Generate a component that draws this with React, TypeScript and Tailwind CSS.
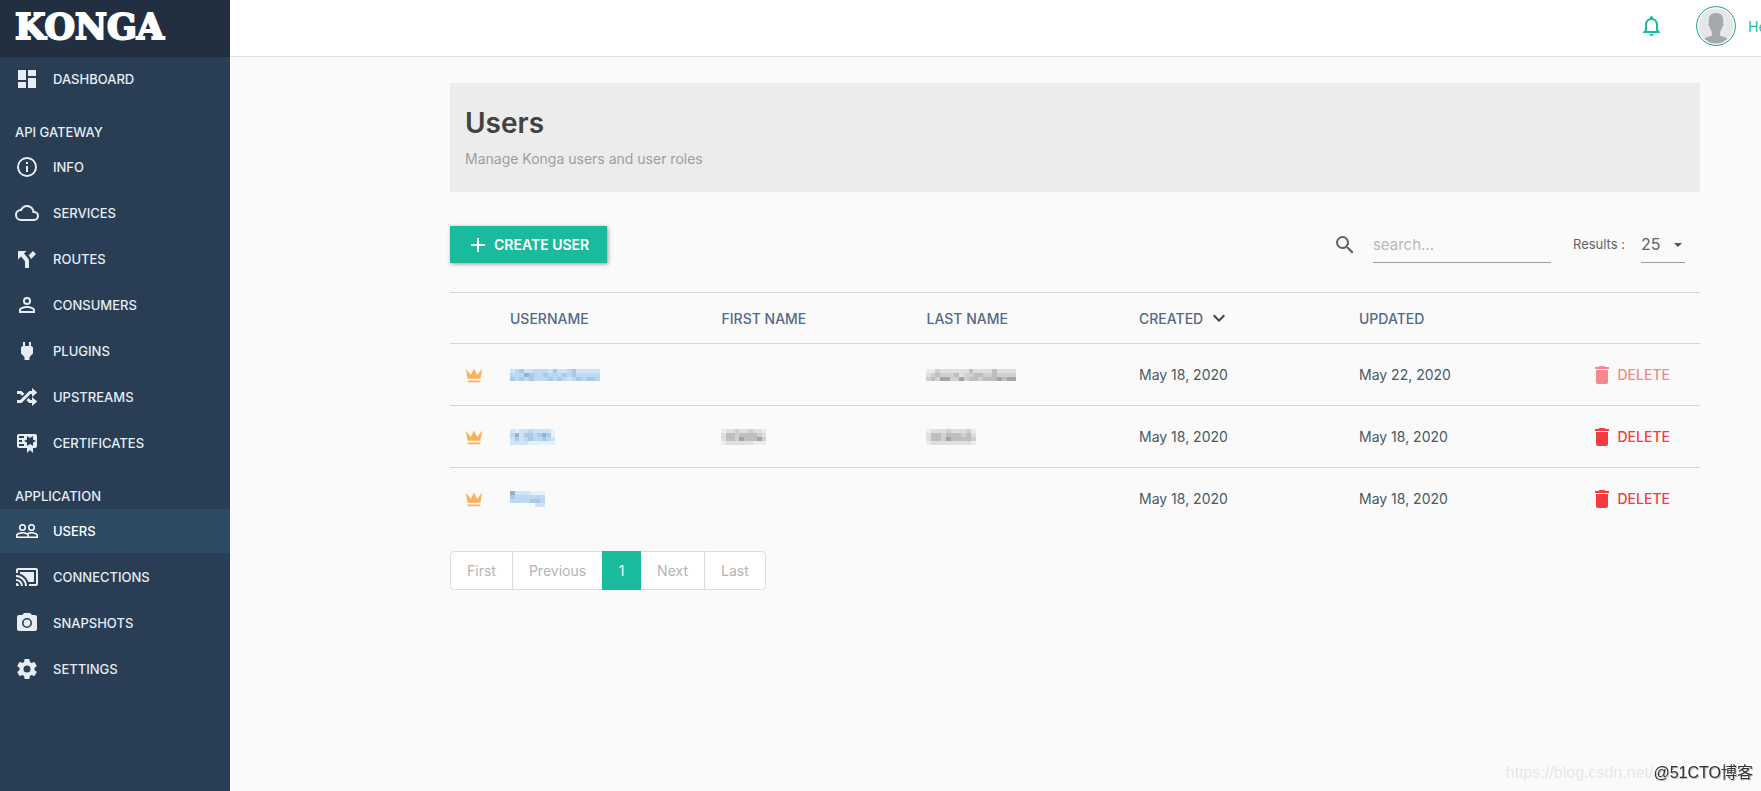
import React from "react";

const ICONS = {
  dashboard: "M13,3V9H21V3M13,21H21V11H13M3,21H11V15H3M3,13H11V3H3V13Z",
  info: "M11,9H13V7H11M12,20C7.59,20 4,16.41 4,12C4,7.59 7.59,4 12,4C16.41,4 20,7.59 20,12C20,16.41 16.41,20 12,20M12,2A10,10 0 0,0 2,12A10,10 0 0,0 12,22A10,10 0 0,0 22,12A10,10 0 0,0 12,2M11,17H13V11H11V17Z",
  cloud: "M19,18H6A4,4 0 0,1 2,14A4,4 0 0,1 6,10H6.71C7.37,7.69 9.5,6 12,6A5.5,5.5 0 0,1 17.5,11.5V12H19A3,3 0 0,1 22,15A3,3 0 0,1 19,18M19.35,10.03C18.67,6.59 15.64,4 12,4C9.11,4 6.6,5.64 5.35,8.03C2.34,8.36 0,10.9 0,14A6,6 0 0,0 6,20H19A5,5 0 0,0 24,15C24,12.36 21.95,10.22 19.35,10.03Z",
  fork: "M3,4V12.5L6,9.5L9,13C10,14 10,15 10,15V21H14V14C14,14 14,13 13.47,12C12.94,11 12,10 12,10L9,6.58L11.5,4M18,4L13.54,8.47L14,9C14,9 14.93,10 15.47,11C15.68,11.4 15.8,11.79 15.87,12.13L21,7",
  account: "M12,13C9.33,13 4,14.33 4,17V20H20V17C20,14.33 14.67,13 12,13M12,4A4,4 0 0,0 8,8A4,4 0 0,0 12,12A4,4 0 0,0 16,8A4,4 0 0,0 12,4M12,14.9C14.97,14.9 18.1,16.36 18.1,17V18.1H5.9V17C5.9,16.36 9,14.9 12,14.9M12,5.9A2.1,2.1 0 0,1 14.1,8A2.1,2.1 0 0,1 12,10.1A2.1,2.1 0 0,1 9.9,8A2.1,2.1 0 0,1 12,5.9Z",
  plug: "M16,7V3H14V7H10V3H8V7H8C7,7 6,8 6,9V14.5L9.5,18V21H14.5V18L18,14.5V9C18,8 17,7 16,7Z",
  shuffle: "M17,3L22.25,7.5L17,12L22.25,16.5L17,21V18H14.26L11.44,15.18L13.56,13.06L15.5,15H17V12L17,9H15.5L6.5,18H2V15H5.26L14.26,6H17V3M2,6H6.5L9.32,8.82L7.2,10.94L5.26,9H2V6Z",
  certificate: "M4,3C2.89,3 2,3.89 2,5V15A2,2 0 0,0 4,17H12V22L15,19L18,22V17H20A2,2 0 0,0 22,15V8L22,6V5A2,2 0 0,0 20,3H16V3H4M12,5L15,7L18,5V8.5L21,10L18,11.5V15L15,13L12,15V11.5L9,10L12,8.5V5M4,5H9V7H4V5M4,9H7V11H4V9M4,13H9V15H4V13Z",
  accounts: "M16.5,6.5A2,2 0 0,1 18.5,8.5A2,2 0 0,1 16.5,10.5A2,2 0 0,1 14.5,8.5A2,2 0 0,1 16.5,6.5M16.5,12A3.5,3.5 0 0,0 20,8.5A3.5,3.5 0 0,0 16.5,5A3.5,3.5 0 0,0 13,8.5A3.5,3.5 0 0,0 16.5,12M7.5,6.5A2,2 0 0,1 9.5,8.5A2,2 0 0,1 7.5,10.5A2,2 0 0,1 5.5,8.5A2,2 0 0,1 7.5,6.5M7.5,12A3.5,3.5 0 0,0 11,8.5A3.5,3.5 0 0,0 7.5,5A3.5,3.5 0 0,0 4,8.5A3.5,3.5 0 0,0 7.5,12M21.5,17.5H14V16.25C14,15.79 13.8,15.39 13.5,15.03C14.36,14.73 15.44,14.5 16.5,14.5C18.94,14.5 21.5,15.71 21.5,16.25M12.5,17.5H2.5V16.25C2.5,15.71 5.06,14.5 7.5,14.5C9.94,14.5 12.5,15.71 12.5,16.25M16.5,13C15.3,13 13.43,13.34 12,14C10.57,13.33 8.7,13 7.5,13C5.33,13 1,14.08 1,16.25V19H23V16.25C23,14.08 18.67,13 16.5,13Z",
  cast: "M21,3H3C1.89,3 1,3.89 1,5V8H3V5H21V19H14V21H21A2,2 0 0,0 23,19V5C23,3.89 22.1,3 21,3M1,10V12A9,9 0 0,1 10,21H12C12,14.92 7.07,10 1,10M19,7H5V8.63C8.96,9.91 12.09,13.04 13.37,17H19M1,14V16A5,5 0 0,1 6,21H8A7,7 0 0,0 1,14M1,18V21H4A3,3 0 0,0 1,18Z",
  camera: "M4,4H7L9,2H15L17,4H20A2,2 0 0,1 22,6V18A2,2 0 0,1 20,20H4A2,2 0 0,1 2,18V6A2,2 0 0,1 4,4M12,7A5,5 0 0,0 7,12A5,5 0 0,0 12,17A5,5 0 0,0 17,12A5,5 0 0,0 12,7M12,8.6A3.4,3.4 0 0,1 15.4,12A3.4,3.4 0 0,1 12,15.4A3.4,3.4 0 0,1 8.6,12A3.4,3.4 0 0,1 12,8.6Z",
  settings: "M12,15.5A3.5,3.5 0 0,1 8.5,12A3.5,3.5 0 0,1 12,8.5A3.5,3.5 0 0,1 15.5,12A3.5,3.5 0 0,1 12,15.5M19.43,12.97C19.47,12.65 19.5,12.33 19.5,12C19.5,11.67 19.47,11.34 19.43,11L21.54,9.37C21.73,9.22 21.78,8.95 21.66,8.73L19.66,5.27C19.54,5.05 19.27,4.96 19.05,5.05L16.56,6.05C16.04,5.66 15.5,5.32 14.87,5.07L14.5,2.42C14.46,2.18 14.25,2 14,2H10C9.75,2 9.54,2.18 9.5,2.42L9.13,5.07C8.5,5.32 7.96,5.66 7.44,6.05L4.95,5.05C4.73,4.96 4.46,5.05 4.34,5.27L2.34,8.73C2.21,8.95 2.27,9.22 2.46,9.37L4.57,11C4.53,11.34 4.5,11.67 4.5,12C4.5,12.33 4.53,12.65 4.57,12.97L2.46,14.63C2.27,14.78 2.21,15.05 2.34,15.27L4.34,18.73C4.46,18.95 4.73,19.03 4.95,18.95L7.44,17.94C7.96,18.34 8.5,18.68 9.13,18.93L9.5,21.58C9.54,21.82 9.75,22 10,22H14C14.25,22 14.46,21.82 14.5,21.58L14.87,18.93C15.5,18.67 16.04,18.34 16.56,17.94L19.05,18.95C19.27,19.03 19.54,18.95 19.66,18.73L21.66,15.27C21.78,15.05 21.73,14.78 21.54,14.63L19.43,12.97Z",
  crown: "M5,16L3,5L8.5,12L12,5L15.5,12L21,5L19,16H5M19,19A1,1 0 0,1 18,20H6A1,1 0 0,1 5,19V18H19V19Z",
  trash: "M19,4H15.5L14.5,3H9.5L8.5,4H5V6H19M6,19A2,2 0 0,0 8,21H16A2,2 0 0,0 18,19V7H6V19Z",
  bell: "M16,17H7V10.5C7,8 9,6 11.5,6C14,6 16,8 16,10.5M18,16V10.5C18,7.43 15.86,4.86 13,4.18V3.5A1.5,1.5 0 0,0 11.5,2A1.5,1.5 0 0,0 10,3.5V4.18C7.13,4.86 5,7.43 5,10.5V16L3,18V19H20V18M11.5,22A2,2 0 0,0 13.5,20H9.5A2,2 0 0,0 11.5,22Z",
  plus: "M19,13H13V19H11V13H5V11H11V5H13V11H19V13Z",
  search: "M9.5,3A6.5,6.5 0 0,1 16,9.5C16,11.11 15.41,12.59 14.44,13.73L14.71,14H15.5L20.5,19L19,20.5L14,15.5V14.71L13.73,14.44C12.59,15.41 11.11,16 9.5,16A6.5,6.5 0 0,1 3,9.5A6.5,6.5 0 0,1 9.5,3M9.5,5C7,5 5,7 5,9.5C5,12 7,14 9.5,14C12,14 14,12 14,9.5C14,7 12,5 9.5,5Z",
  chevron: "M7.41,8.58L12,13.17L16.59,8.58L18,10L12,16L6,10L7.41,8.58Z",
};

type IconName = keyof typeof ICONS;

function Icon({ name, className }: { name: IconName; className: string }) {
  return (
    <svg viewBox="0 0 24 24" aria-hidden="true" className={`shrink-0 ${className}`} fill="currentColor" fillRule="evenodd">
      <path d={ICONS[name]} />
    </svg>
  );
}

type NavEntry = { icon: IconName; label: string; active?: boolean };

const GATEWAY: NavEntry[] = [
  { icon: "info", label: "INFO" },
  { icon: "cloud", label: "SERVICES" },
  { icon: "fork", label: "ROUTES" },
  { icon: "account", label: "CONSUMERS" },
  { icon: "plug", label: "PLUGINS" },
  { icon: "shuffle", label: "UPSTREAMS" },
  { icon: "certificate", label: "CERTIFICATES" },
];

const APPLICATION: NavEntry[] = [
  { icon: "accounts", label: "USERS", active: true },
  { icon: "cast", label: "CONNECTIONS" },
  { icon: "camera", label: "SNAPSHOTS" },
  { icon: "settings", label: "SETTINGS" },
];

function NavItem({ icon, label, active }: NavEntry) {
  return (
    <li>
      <a
        href="#"
        aria-current={active ? "page" : undefined}
        className={`flex h-11 items-center gap-[14px] pl-[15px] ${active ? "bg-[#2f4b63] text-white" : "text-[#e6edf5]"}`}
      >
        <Icon name={icon} className="size-6" />
        <span className="pt-0.5">{label}</span>
      </a>
    </li>
  );
}

function NavGroup({ title, items }: { title?: string; items: NavEntry[] }) {
  return (
    <section>
      {title && <h2 className="h-11 px-[15px] pt-5 leading-[22px] text-[#e6edf5]">{title}</h2>}
      <ul className="flex flex-col gap-0.5">
        {items.map((item) => (
          <NavItem key={item.label} {...item} />
        ))}
      </ul>
    </section>
  );
}

/* Pixelated block that hides a value; each digit is a shade, "." is empty. */
function Mosaic({ rows, tone, className }: { rows: string[]; tone: "blue" | "gray"; className: string }) {
  const shades =
    tone === "blue"
      ? ["#e6f0f9", "#cfe3f5", "#bdd8f0", "#a9cae7", "#8fb2d2"]
      : ["#ececed", "#dfdfe0", "#cfd0d1", "#bcbec0", "#a2a5a8"];
  return (
    <svg
      viewBox={`0 0 ${rows[0].length} ${rows.length}`}
      preserveAspectRatio="none"
      shapeRendering="crispEdges"
      aria-hidden="true"
      className={className}
    >
      {rows.flatMap((row, y) =>
        row.split("").map((c, x) =>
          c === "." ? null : <rect key={`${x}-${y}`} x={x} y={y} width={1} height={1} fill={shades[Number(c)]} />,
        ),
      )}
    </svg>
  );
}

type User = {
  username: React.ReactNode;
  first?: React.ReactNode;
  last?: React.ReactNode;
  created: string;
  updated: string;
  locked?: boolean;
};

const USERS: User[] = [
  {
    username: <Mosaic tone="blue" className="h-3 w-[90px]" rows={["1231122213112311111", "2224322322232322222", "3232322232321232332"]} />,
    last: <Mosaic tone="gray" className="h-3 w-[90px]" rows={["0021111113111131111", "1232223122332232222", "2324422423323334344"]} />,
    created: "May 18, 2020",
    updated: "May 22, 2020",
    locked: true,
  },
  {
    username: <Mosaic tone="blue" className="h-4 w-[45px]" rows={["1011211110", "2413323430", "1312322321", "1111000000"]} />,
    first: <Mosaic tone="gray" className="h-4 w-[50px]" rows={["0112112110.", "1332333321.", "1332433342.", "0111111000."]} />,
    last: <Mosaic tone="gray" className="h-4 w-[50px]" rows={["0111211120", "1332333231", "1332433332", "0111111110"]} />,
    created: "May 18, 2020",
    updated: "May 18, 2020",
  },
  {
    username: <Mosaic tone="blue" className="h-4 w-[35px]" rows={["4111000", "3222222", "2222332", ".....11"]} />,
    created: "May 18, 2020",
    updated: "May 18, 2020",
  },
];

export default function App() {
  return (
    <div className="flex min-h-screen overflow-hidden bg-[#fafafa] font-['Inter',sans-serif] text-[14px] text-[#455a64]">
      <aside className="w-[230px] shrink-0 bg-[#293e54] text-[13px] font-medium">
        <div className="flex h-[57px] items-center bg-[#212f40] px-[15px] pb-1">
          <a href="#" className="font-['DejaVu_Serif',serif] text-[35px] leading-none font-bold text-white [-webkit-text-stroke:2px_white]">
            KONGA
          </a>
        </div>
        <nav>
          <NavGroup items={[{ icon: "dashboard", label: "DASHBOARD" }]} />
          <NavGroup title="API GATEWAY" items={GATEWAY} />
          <NavGroup title="APPLICATION" items={APPLICATION} />
        </nav>
      </aside>

      <div className="min-w-0 flex-1">
        <header className="flex h-[57px] items-center justify-end overflow-hidden border-b border-[#e0e0e0] bg-white pb-1 text-[#1abb9c]">
          <button type="button" aria-label="Notifications" className="mr-8">
            <Icon name="bell" className="size-6" />
          </button>
          <a href="#" className="flex w-[65px] items-center gap-3 whitespace-nowrap">
            <svg viewBox="0 0 40 40" aria-hidden="true" className="size-10 shrink-0">
              <clipPath id="avatar">
                <circle cx="20" cy="20" r="17.5" />
              </clipPath>
              <circle cx="20" cy="20" r="19.4" fill="#fff" stroke="#1f9d86" strokeWidth="1" />
              <g clipPath="url(#avatar)">
                <rect width="40" height="40" fill="#e6e7e8" />
                <path
                  fill="#a5a8ab"
                  d="M20 7c-5 0-7.500 3.300-7.200 8 0 .8.100 1.600.2 2.300-.9.300-.6 3.200.9 3.700.4 2 1 3.600 2 4.700v3.600c-1.600 1.900-7.900 1.700-9.400 5.700v5h27v-5c-1.500-4-7.800-3.800-9.400-5.700v-3.600c1-1.100 1.600-2.700 2-4.700 1.500-.5 1.800-3.400.9-3.700.1-.7.200-1.500.2-2.300.3-4.700-2.200-8-7.200-8z"
                />
              </g>
            </svg>
            <span>Hello</span>
          </a>
        </header>

        <main className="pt-[26px] pr-[61px] pl-[220px]">
          <div className="h-[109px] bg-[#ececec] px-[15px] pt-6">
            <h1 className="text-[28px] leading-8 font-semibold text-[#424242]">Users</h1>
            <p className="mt-2 leading-6 text-[#9e9e9e]">Manage Konga users and user roles</p>
          </div>

          <div className="mt-[34px] flex items-center">
            <button
              type="button"
              className="flex h-[37px] items-center gap-1 bg-[#1abb9c] pr-[18px] pl-4 font-semibold text-white shadow-[1px_1px_4px_rgba(0,0,0,0.4)]"
            >
              <Icon name="plus" className="size-6" />
              CREATE USER
            </button>
            <form className="ml-auto flex items-center pr-[15px]">
              <label htmlFor="search" aria-label="Search" className="text-[#616161]">
                <Icon name="search" className="size-6" />
              </label>
              <input
                id="search"
                type="text"
                placeholder="search..."
                className="ml-4 h-9 w-[178px] border-b border-[#9e9e9e] bg-transparent text-[15px] outline-none placeholder:text-[#b8b8b8]"
              />
              <label htmlFor="results" className="ml-[22px] text-[13px] text-[#616161]">
                Results :
              </label>
              <span className="relative ml-4 flex items-center">
                <select
                  id="results"
                  defaultValue="25"
                  className="h-9 w-[44px] appearance-none border-b border-[#9e9e9e] bg-transparent text-[16px] text-[#616161] outline-none"
                >
                  <option>25</option>
                  <option>50</option>
                </select>
                <svg viewBox="0 0 8 4" aria-hidden="true" className="pointer-events-none absolute right-[3px] h-1 w-2 fill-[#555]">
                  <path d="M0 0h8L4 4z" />
                </svg>
              </span>
            </form>
          </div>

          <table className="mt-[29px] w-full table-fixed border-collapse text-left">
            <thead>
              <tr className="h-[51px] border-y border-[#d5d5d5] text-[#54688a]">
                <th className="w-[45px]" aria-label="Role" />
                <th className="w-[17%] px-[15px] font-medium">USERNAME</th>
                <th className="w-[16.4%] px-[14px] font-medium">FIRST NAME</th>
                <th className="w-[17%] px-[14px] font-medium">LAST NAME</th>
                <th className="w-[17.6%] px-[14px] font-medium">
                  <button type="button" className="flex items-center gap-1">
                    CREATED
                    <Icon name="chevron" className="size-6 text-[#424242]" />
                  </button>
                </th>
                <th className="px-[14px] font-medium">UPDATED</th>
                <th className="w-[140px]" aria-label="Actions" />
              </tr>
            </thead>
            <tbody>
              {USERS.map((user, i) => (
                <tr key={i} className="h-[62px] border-b border-[#d5d5d5] last:border-b-0">
                  <td className="pl-[13px]">
                    <Icon name="crown" className="size-[22px] text-[#fbb157]" />
                  </td>
                  <td className="px-[15px]">
                    <a href="#" aria-label="Open user" className="block">
                      {user.username}
                    </a>
                  </td>
                  <td className="px-[13px]">{user.first}</td>
                  <td className="px-[13px]">{user.last}</td>
                  <td className="px-[14px]">{user.created}</td>
                  <td className="px-[14px]">{user.updated}</td>
                  <td className="pr-[30px]">
                    <button
                      type="button"
                      disabled={user.locked}
                      className="ml-auto flex items-center gap-1 font-medium text-[#f53b40] disabled:opacity-60"
                    >
                      <Icon name="trash" className="size-6" />
                      DELETE
                    </button>
                  </td>
                </tr>
              ))}
            </tbody>
          </table>

          <nav aria-label="Pagination" className="mt-[21px] flex text-[#b4b4b4]">
            <button type="button" className="h-[39px] rounded-l-sm border border-[#dcdcdc] bg-white px-4">
              First
            </button>
            <button type="button" className="h-[39px] border-y border-[#dcdcdc] bg-white px-4">
              Previous
            </button>
            <button type="button" aria-current="page" className="h-[39px] w-[39px] bg-[#1abb9c] text-white">
              1
            </button>
            <button type="button" className="h-[39px] border-y border-[#dcdcdc] bg-white px-4">
              Next
            </button>
            <button type="button" className="h-[39px] rounded-r-sm border border-[#dcdcdc] bg-white px-4">
              Last
            </button>
          </nav>
        </main>
      </div>

      <div className="pointer-events-none fixed right-2 bottom-2 flex items-center font-['Liberation_Sans','Noto_Sans_CJK_SC',sans-serif] text-[16px] leading-5">
        <span className="text-[#e6e6e6]">https://blog.csdn.net/</span>
        <span className="text-[#333] [text-shadow:-1px_-1px_0_#fff,1px_1px_0_#bbb]">@51CTO博客</span>
      </div>
    </div>
  );
}
